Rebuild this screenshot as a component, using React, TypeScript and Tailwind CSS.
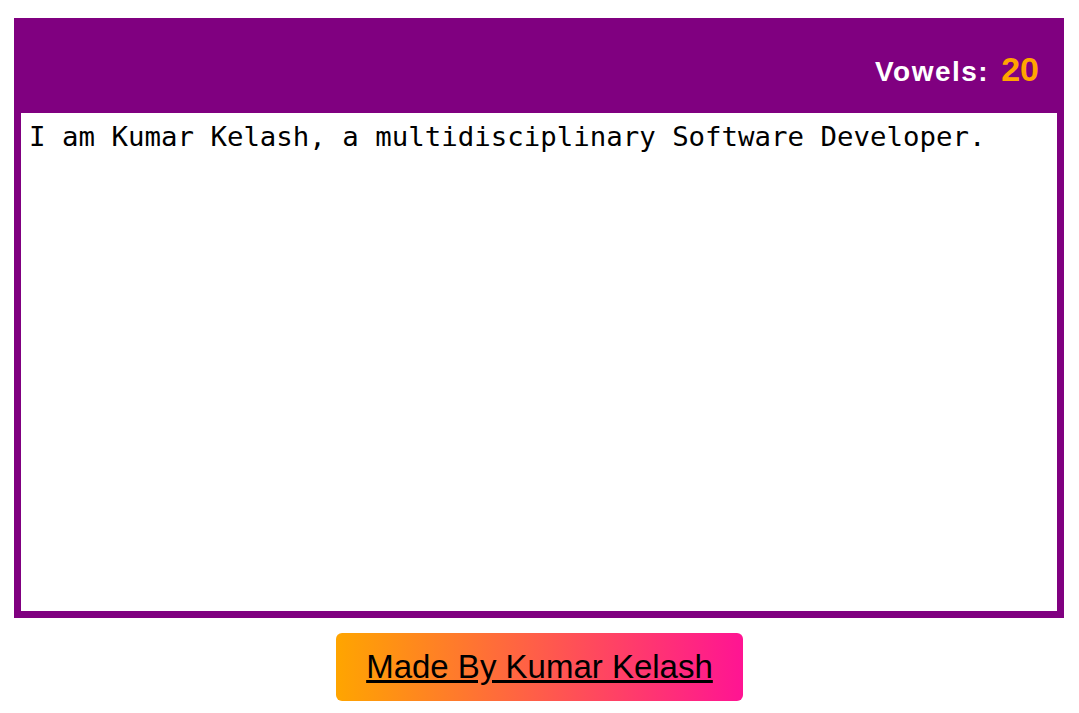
import { useState } from "react";

const countVowels = (s: string) => (s.match(/[aeiou]/gi) || []).length;

const App = () => {
  const [text, setText] = useState<string>(
    "I am Kumar Kelash, a multidisciplinary Software Developer."
  );

  return (
    <div className="w-full min-h-screen bg-white pt-[18px]">
      <section className="ml-[14px] w-[1050px] bg-[#800080] p-[7px]">
        <div className="h-[88px] flex items-center justify-end pr-[18px]">
          <h2
            className="flex items-baseline gap-[12px] text-white"
            style={{ fontFamily: '"Liberation Sans", Arial, sans-serif' }}
          >
            <span className="text-[28px] font-bold tracking-[1.5px]">Vowels:</span>
            <span className="text-[34px] font-bold text-[#FFA500]">
              {countVowels(text)}
            </span>
          </h2>
        </div>
        <textarea
          className="block w-full h-[498px] bg-white text-black text-[27.4px] pl-[8px] pr-[6px] pt-[3px] resize-none outline-none border-0"
          style={{ fontFamily: '"DejaVu Sans Mono", monospace' }}
          value={text}
          onChange={(e) => setText(e.target.value)}
        />
      </section>
      <div className="flex justify-center mt-[15px]">
        <a
          href="#"
          className="px-[30px] py-[15px] rounded-[6px] bg-[linear-gradient(to_right,#FFA500,#FF1493)] text-black text-[33px] leading-[38px] underline"
          style={{ fontFamily: '"Liberation Sans", Arial, sans-serif' }}
        >
          Made By Kumar Kelash
        </a>
      </div>
    </div>
  );
};

export default App;
